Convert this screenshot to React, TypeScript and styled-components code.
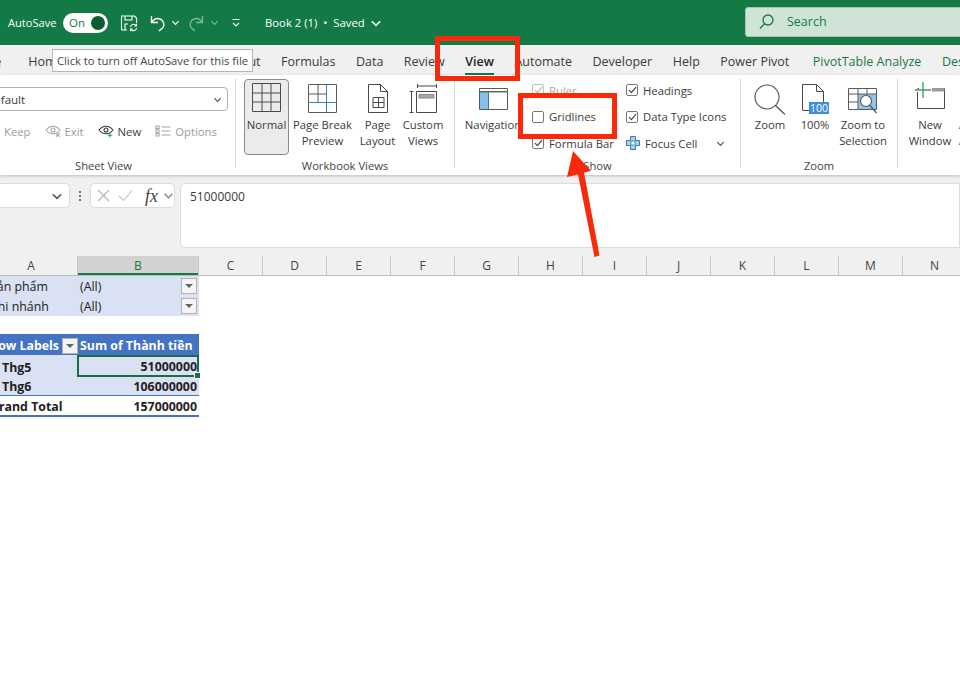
import React from "react";
import styled, { createGlobalStyle } from "styled-components";

const GlobalStyle = createGlobalStyle`
  html, body { margin: 0; padding: 0; background: #fff; }
  body { font-family: "Open Sans", "Noto Sans", "Liberation Sans", sans-serif; color: #3b3b3b; }
`;

const Page = styled.div`
  position: relative;
  width: 960px;
  height: 676px;
  overflow: hidden;
  display: flex;
  flex-direction: column;
  background: #f0f0f0;
`;

const TitleBar = styled.header`
  height: 45px;
  flex: none;
  display: flex;
  align-items: center;
  background: #137a45;
  color: #fff;
  padding-left: 8px;
  font-size: 11.1px;
`;

const AutoSaveLabel = styled.span`
  width: 55px;
  flex: none;
`;

const Toggle = styled.span`
  width: 45px;
  height: 20px;
  flex: none;
  box-sizing: border-box;
  display: flex;
  align-items: center;
  justify-content: space-between;
  padding: 0 3px 0 6px;
  border-radius: 10px;
  background: #fff;
  color: #137a45;
  font-size: 11.5px;
`;

const Knob = styled.span`
  width: 14px;
  height: 14px;
  border-radius: 50%;
  background: #0f5c34;
`;

const QuickIcon = styled.span<{ $w: number; $dim?: boolean }>`
  width: ${(p) => p.$w}px;
  height: 20px;
  flex: none;
  display: flex;
  align-items: center;
  justify-content: center;
  opacity: ${(p) => (p.$dim ? 0.45 : 1)};
`;

const BookTitle = styled.span`
  flex: none;
  width: 480px;
  margin-left: 14px;
  display: flex;
  align-items: center;
  gap: 5px;
  font-size: 11.3px;
`;

const SearchBox = styled.div`
  flex: none;
  width: 240px;
  height: 30px;
  margin-top: -2px;
  box-sizing: border-box;
  display: flex;
  align-items: center;
  gap: 13px;
  padding-left: 13px;
  background: #cfe3d7;
  border: 1px solid #a9c4b4;
  border-radius: 3px;
  color: #137a45;
  font-size: 12.5px;
`;

const TabBar = styled.nav`
  height: 30px;
  flex: none;
  box-sizing: border-box;
  display: flex;
  gap: 20.5px;
  padding-top: 6px;
  margin-left: -18.5px;
  white-space: nowrap;
  font-size: 12.5px;
`;

const Tab = styled.span<{ $active?: boolean; $context?: boolean; $ml?: number }>`
  height: 24px;
  box-sizing: border-box;
  line-height: 22px;
  flex: none;
  margin-left: ${(p) => p.$ml ?? 0}px;
  color: ${(p) => (p.$active ? "#222" : p.$context ? "#137a45" : "#3b3b3b")};
  font-weight: ${(p) => (p.$active ? 600 : 400)};
  border-bottom: 2px solid ${(p) => (p.$active ? "#137a45" : "transparent")};
`;

const Tooltip = styled.div`
  position: absolute;
  left: 52px;
  top: 49px;
  width: 201px;
  height: 23px;
  box-sizing: border-box;
  border: 1px solid #b5b5b5;
  background: #fff;
  font-size: 11.25px;
  line-height: 21px;
  text-align: center;
  white-space: nowrap;
  color: #444;
`;

const Ribbon = styled.section`
  height: 100px;
  flex: none;
  box-sizing: border-box;
  display: flex;
  padding-top: 4px;
  background: #fff;
  box-shadow: 0 1px 3px rgba(0, 0, 0, 0.22);
  font-size: 11.3px;
  overflow: hidden;
`;

const Group = styled.div<{ $w: number; $shift?: number }>`
  width: ${(p) => p.$w}px;
  flex: none;
  box-sizing: border-box;
  margin-left: ${(p) => p.$shift ?? 0}px;
  display: flex;
  flex-direction: column;
`;

const GroupBody = styled.div<{ $pad?: number }>`
  height: 78px;
  display: flex;
  flex: none;
  box-sizing: border-box;
  padding-left: ${(p) => p.$pad ?? 0}px;
`;

const GroupLabel = styled.div`
  height: 18px;
  line-height: 18px;
  text-align: center;
  font-size: 11.2px;
  color: #444;
`;

const GroupSep = styled.div`
  width: 1px;
  height: 89px;
  flex: none;
  background: #d6d6d6;
`;

const BigButton = styled.div<{ $w: number; $on?: boolean; $left?: boolean }>`
  width: ${(p) => p.$w}px;
  height: 76px;
  flex: none;
  box-sizing: border-box;
  display: flex;
  flex-direction: column;
  align-items: center;
  text-align: ${(p) => (p.$left ? "left" : "center")};
  line-height: 16px;
  white-space: nowrap;
  border-radius: 4px;
  border: 1px solid ${(p) => (p.$on ? "#8a8a8a" : "transparent")};
  background: ${(p) => (p.$on ? "#ebebeb" : "transparent")};
`;

const BigIcon = styled.div<{ $top?: number }>`
  height: 37px;
  flex: none;
  width: 100%;
  display: flex;
  justify-content: center;
  align-items: flex-start;
  padding-top: ${(p) => p.$top ?? 4}px;
  box-sizing: border-box;
`;

const SheetViewBody = styled.div`
  width: 100%;
`;

const SheetDropdown = styled.div`
  height: 24px;
  margin: 8px 7px 0 0;
  box-sizing: border-box;
  border: 1px solid #b0b0b0;
  border-radius: 4px;
  display: flex;
  align-items: center;
  justify-content: space-between;
  padding: 0 5px 0 13px;
  font-size: 11.5px;
`;

const ViewRow = styled.div`
  display: flex;
  gap: 14px;
  padding-left: 12px;
  margin-top: 10px;
  height: 20px;
  align-items: center;
`;

const ViewItem = styled.span<{ $dim?: boolean }>`
  display: flex;
  align-items: center;
  gap: 4px;
  flex: none;
  color: ${(p) => (p.$dim ? "#9c9c9c" : "#3b3b3b")};
`;

const CheckColumn = styled.div<{ $w: number; $ml?: number }>`
  width: ${(p) => p.$w}px;
  flex: none;
  margin: -2px 0 0 ${(p) => p.$ml ?? 0}px;
  display: grid;
  grid-template-rows: repeat(3, 26.5px);
  align-items: center;
`;

const CheckRow = styled.div<{ $dim?: boolean }>`
  display: flex;
  align-items: center;
  gap: 5px;
  white-space: nowrap;
  color: ${(p) => (p.$dim ? "#a8a8a8" : "#3b3b3b")};
`;

const CheckBox = styled.span<{ $dim?: boolean }>`
  width: 12px;
  height: 12px;
  flex: none;
  box-sizing: border-box;
  border: 1px solid ${(p) => (p.$dim ? "#c0c0c0" : "#777")};
  border-radius: 2px;
  background: #fff;
  display: flex;
  align-items: center;
  justify-content: center;
`;

const SplitChevron = styled.span`
  margin-left: 14px;
  display: flex;
`;

const FormulaRow = styled.div`
  height: 78px;
  flex: none;
  box-sizing: border-box;
  display: flex;
  align-items: flex-start;
  padding-top: 5px;
  margin-top: 3px;
`;

const NameBox = styled.div`
  width: 120px;
  height: 25px;
  margin-left: -50px;
  flex: none;
  box-sizing: border-box;
  background: #fff;
  border: 1px solid #dcdcdc;
  border-radius: 5px;
  display: flex;
  align-items: center;
  justify-content: flex-end;
  padding-right: 6px;
`;

const Dots = styled.div`
  width: 20px;
  height: 25px;
  flex: none;
  display: flex;
  align-items: center;
  justify-content: center;
`;

const FuncBox = styled.div`
  width: 85px;
  height: 25px;
  flex: none;
  box-sizing: border-box;
  background: #fff;
  border: 1px solid #dcdcdc;
  border-radius: 5px;
  display: flex;
  align-items: center;
  padding-left: 6px;
  gap: 8px;
`;

const FxLabel = styled.span`
  font-family: "Liberation Serif", serif;
  font-style: italic;
  font-size: 18px;
  line-height: 20px;
  color: #444;
  margin-left: 4px;
  margin-right: -3px;
`;

const FormulaInput = styled.div`
  flex: 1;
  height: 65px;
  margin-left: 5px;
  box-sizing: border-box;
  background: #fff;
  border: 1px solid #dcdcdc;
  border-radius: 5px 0 0 5px;
  padding: 4px 9px;
  font-size: 12px;
  line-height: 18px;
`;

const ColumnHeaders = styled.div`
  height: 20px;
  flex: none;
  display: flex;
  margin-left: -15px;
  border-bottom: 1px solid #bdbdbd;
  box-sizing: border-box;
  font-size: 12px;
`;

const ColHead = styled.div<{ $w: number; $on?: boolean }>`
  width: ${(p) => p.$w}px;
  flex: none;
  box-sizing: border-box;
  text-align: center;
  line-height: 19px;
  border-right: 1px solid #c8c8c8;
  color: ${(p) => (p.$on ? "#137a45" : "#444")};
  background: ${(p) => (p.$on ? "#d2d2d2" : "transparent")};
  box-shadow: ${(p) => (p.$on ? "inset 0 -2px 0 #137a45" : "none")};
`;

const Sheet = styled.main`
  flex: 1;
  background: #fff;
  font-size: 12.35px;
  overflow: hidden;
`;

const Pivot = styled.div`
  width: 214px;
  margin-left: -15px;
  display: flex;
  flex-direction: column;
  white-space: nowrap;
`;

const PivotRow = styled.div<{ $h: number; $kind: "filter" | "head" | "data" | "total" | "blank" }>`
  height: ${(p) => p.$h}px;
  flex: none;
  display: grid;
  grid-template-columns: 93px 121px;
  align-items: center;
  box-sizing: border-box;
  background: ${(p) =>
    p.$kind === "filter" || p.$kind === "data"
      ? "#d9e1f2"
      : p.$kind === "head"
      ? "#4472c4"
      : "#fff"};
  color: ${(p) => (p.$kind === "head" ? "#fff" : "#222")};
  font-weight: ${(p) => (p.$kind === "filter" || p.$kind === "blank" ? 400 : 700)};
  border-top: ${(p) => (p.$kind === "total" ? "1px solid #4472c4" : "none")};
  border-bottom: ${(p) => (p.$kind === "total" ? "2px solid #4472c4" : "none")};
`;

const Cell = styled.div<{ $indent?: number; $right?: boolean; $low?: boolean }>`
  height: 100%;
  box-sizing: border-box;
  position: relative;
  display: flex;
  align-items: center;
  justify-content: ${(p) => (p.$right ? "flex-end" : "flex-start")};
  padding-left: ${(p) => p.$indent ?? 5}px;
  padding-right: 2px;
  padding-top: ${(p) => (p.$low ? 2 : 0)}px;
`;

const LabelHeadCell = styled(Cell)`
  justify-content: space-between;
  padding-right: 0;
`;

const SelectedCell = styled(Cell)`
  border: 2px solid #1b6e43;
  margin-left: -1px;
  padding-right: 0;
  padding-top: 1px;
`;

const FillHandle = styled.span`
  position: absolute;
  right: -4px;
  bottom: -4px;
  width: 5px;
  height: 5px;
  background: #1b6e43;
  border: 1px solid #fff;
`;

const FilterButton = styled.span`
  width: 16px;
  height: 16px;
  flex: none;
  box-sizing: border-box;
  background: #f4f4f4;
  border: 1px solid #b4b4b4;
  display: flex;
  align-items: center;
  justify-content: center;
  margin-left: auto;
`;

const Triangle = styled.span`
  width: 0;
  height: 0;
  border-left: 4px solid transparent;
  border-right: 4px solid transparent;
  border-top: 4px solid #666;
`;

const RedBox = styled.div<{ $x: number; $y: number; $w: number; $h: number }>`
  position: absolute;
  left: ${(p) => p.$x}px;
  top: ${(p) => p.$y}px;
  width: ${(p) => p.$w}px;
  height: ${(p) => p.$h}px;
  box-sizing: border-box;
  border: 5px solid #f92a0a;
`;

const ArrowSvg = styled.svg`
  position: absolute;
  left: 560px;
  top: 145px;
`;

const Chevron = ({ c = "#555", s = 9 }: { c?: string; s?: number }) => (
  <svg width={s} height={s} viewBox="0 0 10 10" fill="none">
    <path d="M1.5 3.5 5 7l3.5-3.5" stroke={c} strokeWidth="1.3" />
  </svg>
);

const SaveIcon = () => (
  <svg width="18" height="18" viewBox="0 0 18 18" fill="none" stroke="#fff" strokeWidth="1.1">
    <path d="M7 16H2.5a1 1 0 0 1-1-1V2h13l2 2v5" />
    <path d="M5 2v4h7V2M5 16v-6h3" />
    <path d="M10.5 13a3 3 0 0 1 5-2l1 1m0-2.2V12h-2.2M16.5 14a3 3 0 0 1-5 2l-1-1m0 2.2V15h2.2" />
  </svg>
);

const UndoIcon = ({ flip }: { flip?: boolean }) => (
  <svg width="17" height="18" viewBox="0 0 17 18" fill="none" stroke="#fff" strokeWidth="1.4">
    <g transform={flip ? "translate(17 0) scale(-1 1)" : undefined}>
      <path d="M1.5 2v6.5H8" />
      <path d="M2 8.2C4 5 7 4 10 5c4 1.3 5 6.5 2.5 9L9 17" />
    </g>
  </svg>
);

const CustomizeIcon = () => (
  <svg width="10" height="10" viewBox="0 0 10 10" fill="none" stroke="#fff" strokeWidth="1.1">
    <path d="M1.5 1.5h7M2 5l3 3 3-3" />
  </svg>
);

const SearchGlass = () => (
  <svg width="15" height="16" viewBox="0 0 15 16" fill="none" stroke="#137a45" strokeWidth="1.3">
    <circle cx="9" cy="6" r="5" />
    <path d="M5.5 9.8 1 14.5" />
  </svg>
);

const EyeIcon = ({ dim, plus, cross }: { dim?: boolean; plus?: boolean; cross?: boolean }) => {
  const c = dim ? "#a5a5a5" : "#3b3b3b";
  return (
    <svg width="16" height="14" viewBox="0 0 16 14" fill="none" stroke={c} strokeWidth="1.1">
      <path d="M1 6c2-2.6 4.2-3.8 7-3.8S13 3.4 15 6c-2 2.6-4.2 3.8-7 3.8S3 8.6 1 6Z" />
      <circle cx="8" cy="6" r="2" />
      {plus && <path d="M12 9v4.5M9.8 11.3h4.4" stroke="#2a9a5c" />}
      {cross && <path d="M11 9l3.6 3.8M14.6 9 11 12.8" />}
    </svg>
  );
};

const OptionsIcon = () => (
  <svg width="16" height="12" viewBox="0 0 16 12" fill="none" stroke="#a5a5a5" strokeWidth="1.1">
    <path d="M1 1h3v2.5H1zM1 4.8h3v2.5H1zM1 8.5h3V11H1zM6.5 2h9M6.5 6h9M6.5 10h9" />
  </svg>
);

const GridIcon = () => (
  <svg width="29" height="29" viewBox="0 0 29 29" fill="none" stroke="#4a4a4a" strokeWidth="1">
    <path d="M.5.5h28v28H.5zM10 .5v28M19 .5v28M.5 10h28M.5 19h28" />
  </svg>
);

const PageBreakIcon = () => (
  <svg width="29" height="29" viewBox="0 0 29 29" fill="none" stroke="#5a5a5a" strokeWidth="1">
    <path d="M.5.5h28v28H.5zM10 .5v18M.5 10h18" />
    <path d="M18.5.5v28M.5 18.5h28" stroke="#2a86d8" />
  </svg>
);

const PageLayoutIcon = () => (
  <svg width="22" height="29" viewBox="0 0 22 29" fill="none" stroke="#4a4a4a" strokeWidth="1">
    <path d="M1.5.5h12l7 7v21h-19zM13.5.5v7h7" />
    <path d="M6 13.5h11v10H6zM6 18.5h11M11.5 13.5v10" />
  </svg>
);

const CustomViewsIcon = () => (
  <svg width="29" height="29" viewBox="0 0 29 29" fill="none" stroke="#4a4a4a" strokeWidth="1">
    <path d="M8.5 0v4M27.5 0v4M8.5 2h19" />
    <path d="M.5 7.5h4M.5 28.5h4M2.5 7.5v21" />
    <path d="M7.5 7.5h20v21h-20z" />
    <path d="M10 10.5h15v3.5H10z" fill="#a9a9a9" stroke="#8a8a8a" />
  </svg>
);

const NavigationIcon = () => (
  <svg width="29" height="22" viewBox="0 0 29 22" fill="none">
    <path d="M1 4h8v17H1z" fill="#86bfe8" />
    <path d="M.5.5h28v21H.5z" stroke="#5a5a5a" />
    <path d="M.5 3.7h28" stroke="#5a5a5a" strokeWidth="1.4" />
    <path d="M9.5 4v17" stroke="#2f7cc4" />
  </svg>
);

const TickMark = ({ c = "#444" }: { c?: string }) => (
  <svg width="9" height="8" viewBox="0 0 9 8" fill="none" stroke={c} strokeWidth="1.2">
    <path d="M1 4.2 3.4 6.6 8 1.2" />
  </svg>
);

const FocusCellIcon = () => (
  <svg width="14" height="14" viewBox="0 0 14 14">
    <path d="M4.5.5h5v4h4v5h-4v4h-5v-4h-4v-5h4z" fill="#a9d0ef" stroke="#2f7cc4" />
    <path d="M5 5h4v4H5z" fill="#fff" stroke="#4aa36d" />
  </svg>
);

const ZoomIcon = () => (
  <svg width="32" height="31" viewBox="0 0 32 31" fill="none" stroke="#555" strokeWidth="1.1">
    <circle cx="13" cy="13" r="12" />
    <path d="M21.5 21.5 31 30.5" strokeWidth="1.3" />
  </svg>
);

const HundredIcon = () => (
  <svg width="28" height="30" viewBox="0 0 28 30" fill="none">
    <path d="M1.5 26V.5h14l7 7v11M15.5.5v7h7M1.5 26.5H8" stroke="#4a4a4a" />
    <rect x="8" y="18" width="20" height="12" fill="#3d8fd8" />
    <text x="18" y="28" textAnchor="middle" fontSize="10.5" fill="#fff" fontFamily="Open Sans, sans-serif">100</text>
  </svg>
);

const ZoomSelectionIcon = () => (
  <svg width="30" height="26" viewBox="0 0 30 26" fill="none" stroke="#5a5a5a" strokeWidth="1">
    <rect x="10" y="6" width="18.5" height="16" fill="#8fc4ec" stroke="none" />
    <path d="M.5.5h28v21H.5zM10 .5v21M19 .5v6M.5 6h28M.5 14h9.5" />
    <circle cx="18" cy="13" r="5.5" fill="#fff" strokeWidth="1.2" />
    <path d="M22 17.5 28.5 25" strokeWidth="1.3" />
  </svg>
);

const NewWindowIcon = () => (
  <svg width="30" height="27" viewBox="0 0 30 27" fill="none">
    <path d="M2.5 10v16.5h27v-20H18M2.5 6.5H4" stroke="#4a4a4a" />
    <path d="M17 6h12.5v3.5H17z" fill="#9a9a9a" />
    <path d="M8 0v16M0 8h16" stroke="#3aa06a" strokeWidth="1.4" />
  </svg>
);

const tabs = ["Insert", "Draw", "Page Layout", "Formulas", "Data", "Review"];
const tabsAfter = ["Automate", "Developer", "Help", "Power Pivot"];
const columns = ["C", "D", "E", "F", "G", "H", "I", "J", "K", "L", "M", "N", "O"];

const App: React.FC = () => (
  <Page>
    <GlobalStyle />
    <TitleBar>
      <AutoSaveLabel>AutoSave</AutoSaveLabel>
      <Toggle>
        On
        <Knob />
      </Toggle>
      <QuickIcon $w={42}><SaveIcon /></QuickIcon>
      <QuickIcon $w={17}><UndoIcon /></QuickIcon>
      <QuickIcon $w={16}><Chevron c="#fff" /></QuickIcon>
      <QuickIcon $w={24} $dim><UndoIcon flip /></QuickIcon>
      <QuickIcon $w={14} $dim><Chevron c="#fff" /></QuickIcon>
      <QuickIcon $w={30}><CustomizeIcon /></QuickIcon>
      <BookTitle>
        Book 2 (1) &nbsp;•&nbsp; Saved <Chevron c="#fff" s={12} />
      </BookTitle>
      <SearchBox>
        <SearchGlass />
        Search
      </SearchBox>
    </TitleBar>

    <TabBar>
      <Tab>File</Tab>
      <Tab $ml={6.5}>Home</Tab>
      {tabs.map((t) => (
        <Tab key={t}>{t}</Tab>
      ))}
      <Tab $active>View</Tab>
      {tabsAfter.map((t) => (
        <Tab key={t}>{t}</Tab>
      ))}
      <Tab $context $ml={3}>PivotTable Analyze</Tab>
      <Tab $context>Design</Tab>
    </TabBar>

    <Ribbon>
      <Group $w={263} $shift={-28}>
        <GroupBody>
          <SheetViewBody>
            <SheetDropdown>
              Default
              <Chevron />
            </SheetDropdown>
            <ViewRow>
              <ViewItem $dim><EyeIcon dim />Keep</ViewItem>
              <ViewItem $dim><EyeIcon dim cross />Exit</ViewItem>
              <ViewItem><EyeIcon plus />New</ViewItem>
              <ViewItem $dim><OptionsIcon />Options</ViewItem>
            </ViewRow>
          </SheetViewBody>
        </GroupBody>
        <GroupLabel>Sheet View</GroupLabel>
      </Group>
      <GroupSep />

      <Group $w={218}>
        <GroupBody $pad={8}>
          <BigButton $w={45} $on><BigIcon $top={3}><GridIcon /></BigIcon>Normal</BigButton>
          <BigButton $w={67}><BigIcon><PageBreakIcon /></BigIcon>Page Break<br />Preview</BigButton>
          <BigButton $w={43}><BigIcon><PageLayoutIcon /></BigIcon>Page<br />Layout</BigButton>
          <BigButton $w={48}><BigIcon><CustomViewsIcon /></BigIcon>Custom<br />Views</BigButton>
        </GroupBody>
        <GroupLabel>Workbook Views</GroupLabel>
      </Group>
      <GroupSep />

      <Group $w={285}>
        <GroupBody $pad={5}>
          <BigButton $w={66}><BigIcon $top={8}><NavigationIcon /></BigIcon>Navigation</BigButton>
          <CheckColumn $w={94} $ml={6}>
            <CheckRow $dim><CheckBox $dim><TickMark c="#b5b5b5" /></CheckBox>Ruler</CheckRow>
            <CheckRow><CheckBox />Gridlines</CheckRow>
            <CheckRow><CheckBox><TickMark /></CheckBox>Formula Bar</CheckRow>
          </CheckColumn>
          <CheckColumn $w={110}>
            <CheckRow><CheckBox><TickMark /></CheckBox>Headings</CheckRow>
            <CheckRow><CheckBox><TickMark /></CheckBox>Data Type Icons</CheckRow>
            <CheckRow>
              <FocusCellIcon />Focus Cell
              <SplitChevron><Chevron /></SplitChevron>
            </CheckRow>
          </CheckColumn>
        </GroupBody>
        <GroupLabel>Show</GroupLabel>
      </Group>
      <GroupSep />

      <Group $w={156}>
        <GroupBody $pad={7}>
          <BigButton $w={44}><BigIcon><ZoomIcon /></BigIcon>Zoom</BigButton>
          <BigButton $w={46}><BigIcon><HundredIcon /></BigIcon>100%</BigButton>
          <BigButton $w={50}><BigIcon $top={8}><ZoomSelectionIcon /></BigIcon>Zoom to<br />Selection</BigButton>
        </GroupBody>
        <GroupLabel>Zoom</GroupLabel>
      </Group>
      <GroupSep />

      <Group $w={120}>
        <GroupBody $pad={2}>
          <BigButton $w={60}><BigIcon $top={2}><NewWindowIcon /></BigIcon>New<br />Window</BigButton>
          <BigButton $w={40} $left><BigIcon />Arrange<br />All</BigButton>
        </GroupBody>
      </Group>
    </Ribbon>

    <FormulaRow>
      <NameBox><Chevron s={12} /></NameBox>
      <Dots>
        <svg width="4" height="12" viewBox="0 0 4 12" fill="#555">
          <circle cx="2" cy="2" r="1.1" />
          <circle cx="2" cy="6" r="1.1" />
          <circle cx="2" cy="10" r="1.1" />
        </svg>
      </Dots>
      <FuncBox>
        <svg width="13" height="13" viewBox="0 0 13 13" stroke="#b5b5b5" strokeWidth="1.1">
          <path d="M1 1l11 11M12 1 1 12" />
        </svg>
        <svg width="15" height="13" viewBox="0 0 15 13" fill="none" stroke="#c2c2c2" strokeWidth="1.1">
          <path d="M1 7l4.5 4.5L14 1.5" />
        </svg>
        <FxLabel>fx</FxLabel>
        <Chevron c="#888" s={11} />
      </FuncBox>
      <FormulaInput>51000000</FormulaInput>
    </FormulaRow>

    <ColumnHeaders>
      <ColHead $w={93}>A</ColHead>
      <ColHead $w={121} $on>B</ColHead>
      {columns.map((c) => (
        <ColHead key={c} $w={64}>{c}</ColHead>
      ))}
    </ColumnHeaders>

    <Sheet>
      <Pivot>
        <PivotRow $h={20} $kind="filter">
          <Cell>Sản phẩm</Cell>
          <Cell $indent={2}>(All)<FilterButton><Triangle /></FilterButton></Cell>
        </PivotRow>
        <PivotRow $h={20} $kind="filter">
          <Cell>Chi nhánh</Cell>
          <Cell $indent={2}>(All)<FilterButton><Triangle /></FilterButton></Cell>
        </PivotRow>
        <PivotRow $h={18} $kind="blank" />
        <PivotRow $h={21} $kind="head">
          <LabelHeadCell $low>Row Labels<FilterButton><Triangle /></FilterButton></LabelHeadCell>
          <Cell $indent={2} $low>Sum of Thành tiền</Cell>
        </PivotRow>
        <PivotRow $h={20} $kind="data">
          <Cell $indent={17} $low>Thg5</Cell>
          <SelectedCell $right>51000000<FillHandle /></SelectedCell>
        </PivotRow>
        <PivotRow $h={20} $kind="data">
          <Cell $indent={17} $low>Thg6</Cell>
          <Cell $right $low>106000000</Cell>
        </PivotRow>
        <PivotRow $h={22} $kind="total">
          <Cell $low>Grand Total</Cell>
          <Cell $right $low>157000000</Cell>
        </PivotRow>
      </Pivot>
    </Sheet>

    <Tooltip>Click to turn off AutoSave for this file</Tooltip>
    <RedBox $x={435} $y={36} $w={85} $h={45} />
    <RedBox $x={518} $y={93} $w={99} $h={46} />
    <ArrowSvg width="50" height="116" viewBox="0 0 50 116">
      <path d="M13 6 7 32l11-2.6L34.5 112l5-1.4L24 27.6 31 26Z" fill="#f92a0a" />
    </ArrowSvg>
  </Page>
);

export default App;
